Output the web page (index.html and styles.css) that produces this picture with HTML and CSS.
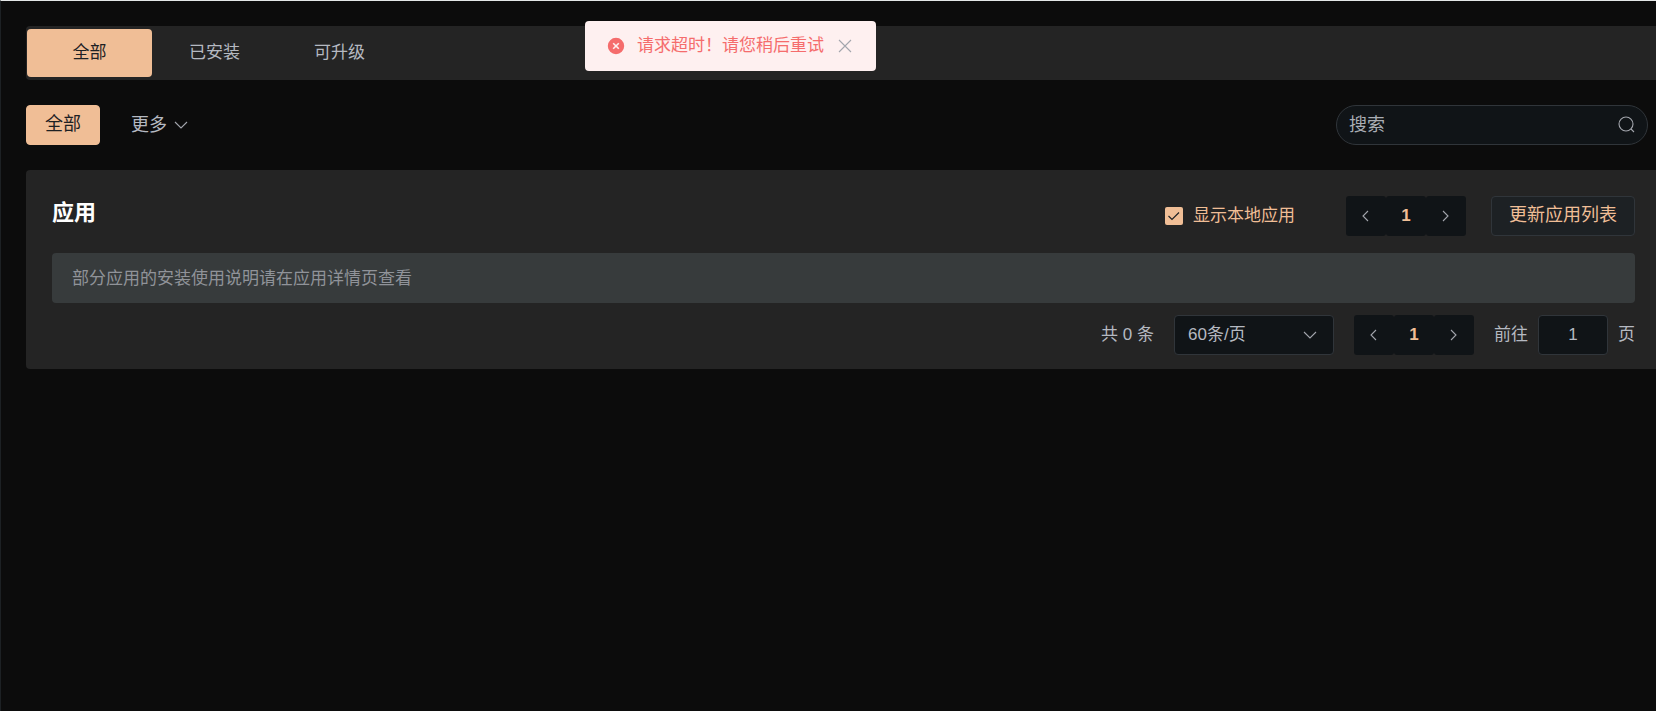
FILE: index.html
```html
<!DOCTYPE html>
<html lang="zh-CN">
<head>
  <meta charset="UTF-8" />
  <meta name="viewport" content="width=device-width, initial-scale=1.0"/>
  <title>应用</title>
  <link rel="stylesheet" href="styles.css">
</head>
<body>
  <div class="message" role="alert">
    <svg class="message-icon" viewBox="0 0 18 18"><circle cx="9" cy="9" r="9"/><path d="M6.2 6.2l5.6 5.6M11.8 6.2l-5.6 5.6"/></svg>
    <span>请求超时！请您稍后重试</span>
    <button class="message-close" aria-label="关闭">
      <svg class="icon" viewBox="0 0 18 18"><path d="M3 3l12 12M15 3L3 15"/></svg>
    </button>
  </div>

  <main class="page">
    <nav class="tabs">
      <button class="tab active">全部</button>
      <button class="tab">已安装</button>
      <button class="tab">可升级</button>
    </nav>

    <div class="filters">
      <div class="tags">
        <button class="btn btn-primary">全部</button>
        <button class="btn-link">更多
          <svg class="icon" viewBox="0 0 18 18"><path d="M3 6l6 6 6-6"/></svg>
        </button>
      </div>
      <label class="search">
        <input type="text" placeholder="搜索" aria-label="搜索" />
        <svg class="icon" viewBox="0 0 18 18"><circle cx="9" cy="8" r="7"/><path d="M14 13l3 3"/></svg>
      </label>
    </div>

    <section class="card">
      <div class="card-header">
        <h1>应用</h1>
        <div class="card-tools">
          <label class="check">
            <span class="check-box">
              <input type="checkbox" checked />
              <svg viewBox="0 0 18 18"><path d="M3.5 9l3.5 3.5L14 5.5"/></svg>
            </span>
            显示本地应用
          </label>
          <div class="pager">
            <button aria-label="上一页"><svg class="icon" viewBox="0 0 18 18"><path d="M11 4L6 9l5 5"/></svg></button>
            <button class="current">1</button>
            <button aria-label="下一页"><svg class="icon" viewBox="0 0 18 18"><path d="M6 4l5 5-5 5"/></svg></button>
          </div>
          <button class="btn">更新应用列表</button>
        </div>
      </div>

      <div class="notice">部分应用的安装使用说明请在应用详情页查看</div>

      <div class="pagination">
        <span>共 0 条</span>
        <div class="select">
          <select aria-label="每页条数">
            <option>60条/页</option>
          </select>
          <svg class="icon" viewBox="0 0 18 18"><path d="M3 6l6 6 6-6"/></svg>
        </div>
        <div class="pager">
          <button aria-label="上一页"><svg class="icon" viewBox="0 0 18 18"><path d="M11 4L6 9l5 5"/></svg></button>
          <button class="current">1</button>
          <button aria-label="下一页"><svg class="icon" viewBox="0 0 18 18"><path d="M6 4l5 5-5 5"/></svg></button>
        </div>
        <div class="jump">
          <label for="jump">前往</label>
          <input type="text" id="jump" value="1" />
          <span>页</span>
        </div>
      </div>
    </section>
  </main>
</body>
</html>
```

FILE: styles.css
```css
* { box-sizing: border-box; }
body {
  margin: 0;
  min-height: 100vh;
  font-family: "Liberation Sans", "Noto Sans CJK SC", sans-serif;
  font-size: 17px;
  line-height: 24px;
  color: #b5b9c1;
  background: #0c0c0c;
  border-top: 1px solid #e4e7e7;
  border-left: 1px solid #1d2124;
}
button, input, select {
  font: inherit;
  color: inherit;
  margin: 0;
}
button {
  padding: 0;
  border: none;
  background: none;
  cursor: pointer;
}
.icon {
  width: 18px;
  height: 18px;
  flex: none;
  fill: none;
  stroke: #a3a6ad;
  stroke-width: 1.1;
}
.page { padding: 25px 0 25px 25px; }

/* floating error message */
.message {
  position: absolute;
  top: 21px;
  left: 585px;
  height: 50px;
  padding: 0 22px;
  display: flex;
  align-items: center;
  gap: 12px;
  color: #f56c6c;
  background: #fef0f0;
  border-radius: 4px;
}
.message-icon {
  width: 18px;
  height: 18px;
  fill: #f56c6c;
  stroke: #fef0f0;
  stroke-width: 1.6;
}
.message-close { display: flex; }

.tabs {
  display: flex;
  padding: 3px 1px;
  background: #242424;
  border-radius: 4px 0 0 4px;
}
.tab {
  width: 125px;
  height: 48px;
  border-radius: 4px;
}
.tab.active {
  color: #1d2124;
  background: #f0be96;
}

.filters {
  display: flex;
  justify-content: space-between;
  padding: 25px 8px 25px 0;
}
.tags { display: flex; gap: 31px; }
.btn {
  height: 40px;
  padding: 0 17px 2px;
  font-size: 18px;
  color: #f0be96;
  background: #1d2124;
  border: 1px solid #30353a;
  border-radius: 4px;
}
.btn-primary {
  padding: 0 18px 2px;
  color: #1d2124;
  background: #f0be96;
  border-color: #f0be96;
}
.btn-link {
  display: flex;
  align-items: center;
  gap: 5px;
  font-size: 18px;
}
.search {
  display: flex;
  align-items: center;
  width: 312px;
  height: 40px;
  padding: 0 12px;
  background: #101417;
  border: 1px solid #30353a;
  border-radius: 20px;
}
.search input {
  flex: 1;
  min-width: 0;
  padding: 0;
  border: none;
  outline: none;
  background: none;
  font-size: 18px;
}
.search input::placeholder { color: #a9adb4; }

.card {
  padding: 26px 21px 14px 26px;
  background: #242424;
  border-radius: 4px 0 0 4px;
}
.card-header {
  display: flex;
  justify-content: space-between;
}
h1 {
  margin: 0;
  font-size: 22px;
  line-height: 34px;
  color: #fff;
}
.card-tools {
  display: flex;
  align-items: center;
  gap: 25px;
}
.check {
  display: flex;
  align-items: center;
  gap: 10px;
  margin-right: 26px;
  color: #f0be96;
}
.check-box { display: grid; }
.check-box input, .check-box svg {
  grid-area: 1 / 1;
  width: 18px;
  height: 18px;
  margin: 0;
}
.check-box input {
  appearance: none;
  background: #f0be96;
  border-radius: 2px;
}
.check-box svg {
  fill: none;
  stroke: #1d2124;
  stroke-width: 1.2;
  display: none;
  pointer-events: none;
}
.check-box input:checked + svg { display: block; }

.pager { display: flex; }
.pager button {
  display: flex;
  align-items: center;
  justify-content: center;
  width: 40px;
  height: 40px;
  background: #101417;
  border-radius: 3px;
}
.pager .current {
  color: #f0be96;
  font-weight: bold;
}

.notice {
  margin: 17px 0 12px;
  padding: 14px 20px 12px;
  color: #909399;
  background: #373b3c;
  border-radius: 4px;
}

.pagination {
  display: flex;
  align-items: center;
  justify-content: flex-end;
  gap: 20px;
}
.select {
  display: grid;
  align-items: center;
  width: 160px;
}
.select select, .select .icon { grid-area: 1 / 1; }
.select select {
  appearance: none;
  width: 100%;
  height: 40px;
  padding: 0 13px;
  background: #101417;
  border: 1px solid #30353a;
  border-radius: 4px;
}
.select .icon {
  justify-self: end;
  margin-right: 15px;
  pointer-events: none;
}
.jump {
  display: flex;
  align-items: center;
  gap: 10px;
}
.jump input {
  width: 70px;
  height: 40px;
  padding: 0;
  text-align: center;
  background: #101417;
  border: 1px solid #30353a;
  border-radius: 4px;
}
```
